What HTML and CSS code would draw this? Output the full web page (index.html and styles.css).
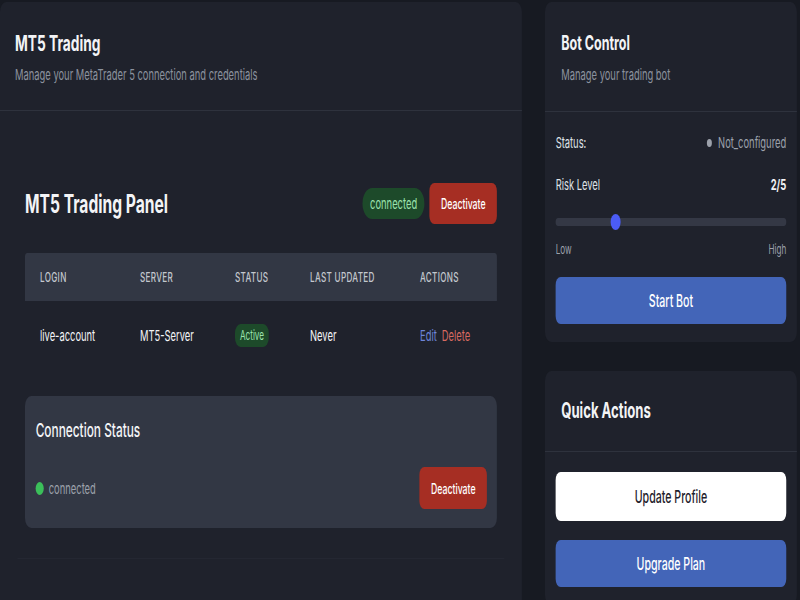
FILE: index.html
```html
<!DOCTYPE html>
<html lang="en">
<head>
    <meta charset="UTF-8">
    <title>MT5 Trading</title>
    <link rel="stylesheet" href="styles.css">
</head>
<body>
    <!-- the page is laid out at 1280px and squeezed to the 800px frame -->
    <div class="page">
        <div class="card main-card">
            <div class="card-header">
                <h1>MT5 Trading</h1>
                <p class="subtitle">Manage your MetaTrader 5 connection and credentials</p>
            </div>
            <div class="main-body">
                <div class="panel-head">
                    <h2>MT5 Trading Panel</h2>
                    <div class="panel-tools">
                        <span class="badge">connected</span>
                        <button class="btn-danger">Deactivate</button>
                    </div>
                </div>

                <table class="accounts">
                    <thead>
                        <tr>
                            <th>Login</th>
                            <th>Server</th>
                            <th>Status</th>
                            <th>Last Updated</th>
                            <th>Actions</th>
                        </tr>
                    </thead>
                    <tbody>
                        <tr>
                            <td>live-account</td>
                            <td>MT5-Server</td>
                            <td><span class="pill">Active</span></td>
                            <td>Never</td>
                            <td><a class="link-edit">Edit</a><a class="link-delete">Delete</a></td>
                        </tr>
                    </tbody>
                </table>

                <div class="conn-box">
                    <h3>Connection Status</h3>
                    <div class="conn-row">
                        <span class="conn-state"><span class="dot green"></span>connected</span>
                        <button class="btn-danger">Deactivate</button>
                    </div>
                </div>
                <div class="faint-line"></div>
            </div>
        </div>

        <div class="side">
            <div class="card bot-card">
                <div class="card-header side-header">
                    <h2 class="side-title">Bot Control</h2>
                    <p class="subtitle">Manage your trading bot</p>
                </div>
                <div class="side-body">
                    <div class="row">
                        <span>Status:</span>
                        <span class="muted"><span class="dot grey"></span>Not_configured</span>
                    </div>
                    <div class="row risk">
                        <span>Risk Level</span>
                        <strong>2/5</strong>
                    </div>
                    <div class="slider">
                        <div class="thumb" style="left: 26%"></div>
                    </div>
                    <div class="row scale muted">
                        <span>Low</span>
                        <span>High</span>
                    </div>
                    <button class="btn-primary">Start Bot</button>
                </div>
            </div>

            <div class="card">
                <div class="card-header qa-header">
                    <h2 class="side-title big">Quick Actions</h2>
                </div>
                <div class="side-body qa-body">
                    <button class="btn-light">Update Profile</button>
                    <button class="btn-primary">Upgrade Plan</button>
                </div>
            </div>
        </div>
    </div>
</body>
</html>
```

FILE: styles.css
```css
body {
    margin: 0;
    background-color: #171a22;
    font-family: Inter, "Noto Sans", sans-serif;
    color: #f3f4f6;
    overflow: hidden;
}
.page {
    width: 1280px;
    display: grid;
    grid-template-columns: 835px 403px;
    column-gap: 37px;
    padding-top: 2px;
    align-items: start;
    transform: scaleX(0.625);
    transform-origin: left top;
}
.card {
    background-color: #1f222c;
    border-radius: 10px;
}
.main-card {
    height: 640px;
}
.card-header {
    padding: 27px 24px 25px;
    border-bottom: 1px solid #2e323d;
}
h1 {
    margin: 0;
    font-size: 22px;
    line-height: 28px;
    font-weight: 700;
}
.subtitle {
    margin: 8px 0 0;
    font-size: 15px;
    line-height: 20px;
    color: #8c929e;
}
.main-body {
    padding: 72px 40px 0;
}
.panel-head {
    display: flex;
    justify-content: space-between;
    align-items: center;
}
h2 {
    margin: 0;
    font-size: 25px;
    line-height: 32px;
    font-weight: 700;
}
.panel-tools {
    display: flex;
    align-items: center;
    gap: 8px;
}
.badge {
    background-color: #1d4a2a;
    color: #9be3ad;
    font-size: 15px;
    line-height: 31px;
    padding: 0 12px;
    border-radius: 16px;
}
button {
    font-family: inherit;
    border: none;
    cursor: pointer;
}
.btn-danger {
    background-color: #a62e23;
    color: #ffffff;
    font-size: 14px;
    font-weight: 500;
    height: 41px;
    padding: 0 18px;
    border-radius: 8px;
}
.accounts {
    width: 100%;
    margin-top: 29px;
    border-collapse: collapse;
    /* header band drawn on the table so no seams show between cells */
    background-image: linear-gradient(#323744 48px, transparent 48px);
    border-radius: 4px;
}
.accounts th {
    color: #c3c7ce;
    font-size: 13px;
    font-weight: 500;
    letter-spacing: 0.5px;
    text-transform: uppercase;
    text-align: left;
    height: 48px;
    padding: 0 0 0 24px;
}
.accounts td {
    height: 69px;
    font-size: 15px;
    font-weight: 400;
    padding: 0 0 0 24px;
}
.accounts th:nth-child(1) { width: 136px; }
.accounts th:nth-child(2) { width: 128px; }
.accounts th:nth-child(3) { width: 96px; }
.accounts th:nth-child(4) { width: 152px; }
.pill {
    background-color: #1d4a2a;
    color: #9be3ad;
    font-size: 13px;
    line-height: 23px;
    display: inline-block;
    padding: 0 8px;
    border-radius: 9px;
}
.link-edit {
    color: #6d85d9;
    margin-right: 8px;
}
.link-delete {
    color: #d66a61;
}
.conn-box {
    margin-top: 26px;
    background-color: #323744;
    border-radius: 10px;
    padding: 21px 16px 19px 17px;
}
h3 {
    margin: 0;
    font-size: 19px;
    line-height: 28px;
    font-weight: 500;
}
.conn-row {
    display: flex;
    justify-content: space-between;
    align-items: center;
    margin-top: 22px;
}
.conn-row .btn-danger {
    height: 42px;
}
.conn-state {
    display: flex;
    align-items: center;
    gap: 8px;
    color: #9ca1ab;
    font-size: 15px;
}
.dot {
    display: inline-block;
    border-radius: 50%;
}
.dot.green {
    width: 13px;
    height: 13px;
    background-color: #3bbf5a;
}
.dot.grey {
    width: 8px;
    height: 8px;
    background-color: #9ca1ab;
    margin-right: 10px;
    vertical-align: 1px;
}
.faint-line {
    margin: 30px -12px 0;
    border-top: 1px solid #242732;
}
.side {
    display: flex;
    flex-direction: column;
    gap: 29px;
}
.side-header {
    padding: 27px 26px 26px;
}
.side-title {
    font-size: 20px;
    line-height: 28px;
}
.side-title.big {
    font-size: 21px;
}
.qa-header {
    padding: 26px 26px 26px;
}
.side-body {
    padding: 21px 17px 18px;
    display: flex;
    flex-direction: column;
}
.row {
    display: flex;
    justify-content: space-between;
    align-items: center;
    font-size: 15px;
    line-height: 20px;
    color: #dfe2e7;
    margin-bottom: 22px;
}
.row strong {
    color: #f3f4f6;
}
.row.risk {
    margin-bottom: 23px;
}
.muted {
    color: #9ca1ab;
}
.row.scale {
    font-size: 13px;
    line-height: 16px;
    color: #9ca1ab;
    margin-bottom: 20px;
}
.slider {
    position: relative;
    height: 8px;
    background-color: #343845;
    border-radius: 4px;
    margin-bottom: 15px;
}
.thumb {
    position: absolute;
    top: -4px;
    width: 16px;
    height: 16px;
    margin-left: -8px;
    border-radius: 50%;
    background-color: #4b5cf5;
}
.btn-primary {
    background-color: #4365b8;
    color: #ffffff;
    font-size: 17px;
    font-weight: 500;
    height: 47px;
    border-radius: 8px;
}
.btn-light {
    background-color: #ffffff;
    color: #1f222c;
    font-size: 17px;
    font-weight: 500;
    height: 49px;
    border-radius: 8px;
    margin-bottom: 19px;
}
.qa-body {
    padding-top: 20px;
}
```
